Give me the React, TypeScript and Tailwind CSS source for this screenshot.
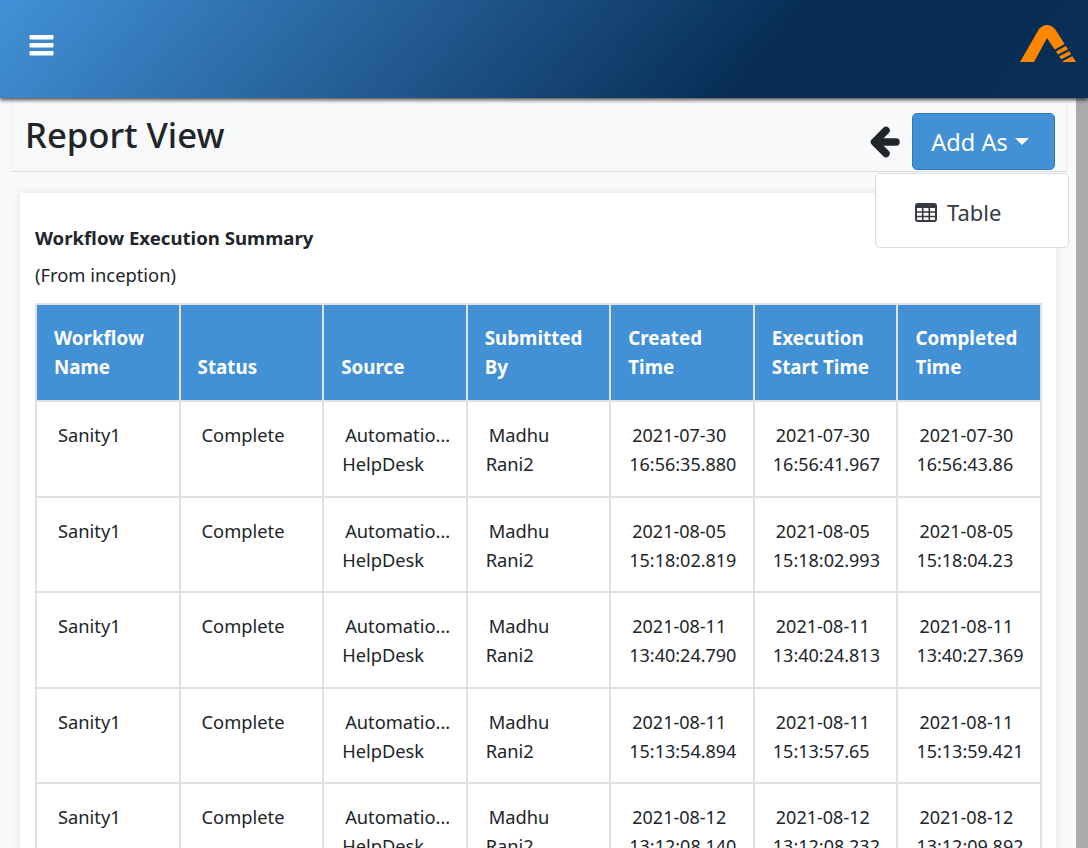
const rows = [
  ['2021-07-30', '16:56:35.880', '2021-07-30', '16:56:41.967', '2021-07-30', '16:56:43.86'],
  ['2021-08-05', '15:18:02.819', '2021-08-05', '15:18:02.993', '2021-08-05', '15:18:04.23'],
  ['2021-08-11', '13:40:24.790', '2021-08-11', '13:40:24.813', '2021-08-11', '13:40:27.369'],
  ['2021-08-11', '15:13:54.894', '2021-08-11', '15:13:57.65', '2021-08-11', '15:13:59.421'],
  ['2021-08-12', '13:12:08.140', '2021-08-12', '13:12:08.232', '2021-08-12', '13:12:09.892'],
];

const headers = [
  ['Workflow', 'Name'],
  ['Status'],
  ['Source'],
  ['Submitted', 'By'],
  ['Created', 'Time'],
  ['Execution', 'Start Time'],
  ['Completed', 'Time'],
];

function Logo() {
  return (
    <svg width="56" height="38" viewBox="0 0 56 38" className="mb-[12px]">
      <path d="M0 38 L19 5 Q27 -3 35 5 L56 38 L43 38 L27 14 L14 38 Z" fill="#ff8700" />
      <g stroke="#072c54" strokeWidth="2.2">
        <path d="M35 26.8 L47 20" />
        <path d="M37.5 32 L50 25.5" />
        <path d="M40.5 37 L53 30.5" />
      </g>
    </svg>
  );
}

function Hamburger() {
  return (
    <svg width="25" height="21" viewBox="0 0 25 21" className="mb-[8px]" fill="#fff">
      <rect x="0.5" y="0" width="24" height="4.5" rx="1" />
      <rect x="0.5" y="8" width="24" height="4.5" rx="1" />
      <rect x="0.5" y="16" width="24" height="4.5" rx="1" />
    </svg>
  );
}

function BackArrow() {
  return (
    <svg width="30" height="32" viewBox="0 0 30 32" fill="none" stroke="#212529" strokeWidth="7.5" strokeLinecap="round" strokeLinejoin="round" className="mt-[2px]">
      <path d="M16 4.5 L4.5 16 L16 27.5" />
      <path d="M5 16 L26 16" />
    </svg>
  );
}

function TableIcon() {
  return (
    <svg width="22" height="19" viewBox="0 0 22 19" fill="none" stroke="#343a40" strokeWidth="2">
      <rect x="1" y="1" width="20" height="17" rx="2" />
      <path d="M1 3.5 H21" strokeWidth="3" />
      <path d="M1 9 H21 M1 13.5 H21 M7.7 4 V18 M14.3 4 V18" strokeWidth="1.6" />
    </svg>
  );
}

function Cell({ lines, date }: { lines: string[]; date?: boolean }) {
  return (
    <td
      className={
        date
          ? 'h-[95.5px] border-2 border-[#dee2e6] pt-[19px] pl-[18px] pr-0 align-top indent-[3px] text-[18px]'
          : 'h-[95.5px] border-2 border-[#dee2e6] pt-[18px] pl-[18px] pr-0 align-top indent-[3px] text-[18.3px]'
      }
    >
      {lines[0]}
      {lines[1] && <br />}
      {lines[1]}
    </td>
  );
}

export default function App() {
  return (
    <div className="flex h-[848px] flex-col overflow-hidden bg-[#f8f9fa] font-['Noto_Sans',sans-serif] text-[#212529]">
      {/* Top bar */}
      <header className="relative z-10 flex h-[98px] shrink-0 items-center justify-between bg-[linear-gradient(131deg,#4291d8_0%,#072c54_70%,#0a2f57_100%)] pl-[29px] pr-[12px] shadow-[0_2px_4px_rgba(0,0,0,0.7)]">
        <Hamburger />
        <Logo />
      </header>

      <div className="flex min-h-0 flex-1">
        <main className="relative min-w-0 flex-1 overflow-hidden">
          {/* Title row */}
          <div className="ml-[12px] mr-[9px] flex h-[74px] items-center justify-between border border-t-0 border-[#eceef0] border-b-[#d8dadd] pl-[12px] pr-[11px]">
            <h1 className="pt-[2px] text-[34.7px] font-medium leading-none">Report View</h1>
            <div className="flex items-center gap-[12px] pt-[13px]">
              <BackArrow />
              <button
                type="button"
                className="flex h-[57px] w-[143px] items-center justify-center gap-[7px] rounded-[5px] border border-[#2f78bd] bg-[#4290d6] pr-[7px] pt-[3px] text-[23.5px] text-white"
              >
                Add As
                <span className="mb-[3px] border-x-[7px] border-t-[7px] border-x-transparent border-t-white" />
              </button>
            </div>
          </div>

          {/* Dropdown */}
          <div className="absolute left-[875px] top-[75px] z-20 flex h-[75px] w-[194px] items-center gap-[10px] rounded-[5px] border border-[#d9dbde] bg-white pl-[39px] pt-[4px] text-[22px] text-[#343a40]">
            <TableIcon />
            Table
          </div>

          {/* Report card */}
          <section className="ml-[20px] mr-[20px] mt-[21px] bg-white pl-[15px] pr-[15px] pt-[32px] shadow-[0_0_8px_rgba(0,0,0,0.1)]">
            <h2 className="text-[18.6px] font-bold leading-[26px]">Workflow Execution Summary</h2>
            <p className="mt-[11px] text-[18.35px] leading-[26px]">(From inception)</p>
            <table className="mt-[15px] w-[1007px] table-fixed border-collapse text-[18.3px] leading-[29px]">
              <thead>
                <tr>
                  {headers.map((lines) => (
                    <th
                      key={lines[0]}
                      className="h-[97px] border-2 border-[#dee2e6] bg-[#4290d6] pb-[18px] pl-[17px] pr-0 text-left align-bottom text-[18.8px] font-bold text-white"
                    >
                      {lines[0]}
                      {lines[1] && <br />}
                      {lines[1]}
                    </th>
                  ))}
                </tr>
              </thead>
              <tbody>
                {rows.map((r) => (
                  <tr key={r[1]}>
                    <Cell lines={['Sanity1']} />
                    <Cell lines={['Complete']} />
                    <Cell lines={['Automatio...', 'HelpDesk']} />
                    <Cell lines={['Madhu', 'Rani2']} />
                    <Cell date lines={[r[0], r[1]]} />
                    <Cell date lines={[r[2], r[3]]} />
                    <Cell date lines={[r[4], r[5]]} />
                  </tr>
                ))}
              </tbody>
            </table>
          </section>
        </main>

        {/* Scrollbar */}
        <div className="w-[12px] shrink-0 bg-[#ababab]" />
      </div>
    </div>
  );
}
